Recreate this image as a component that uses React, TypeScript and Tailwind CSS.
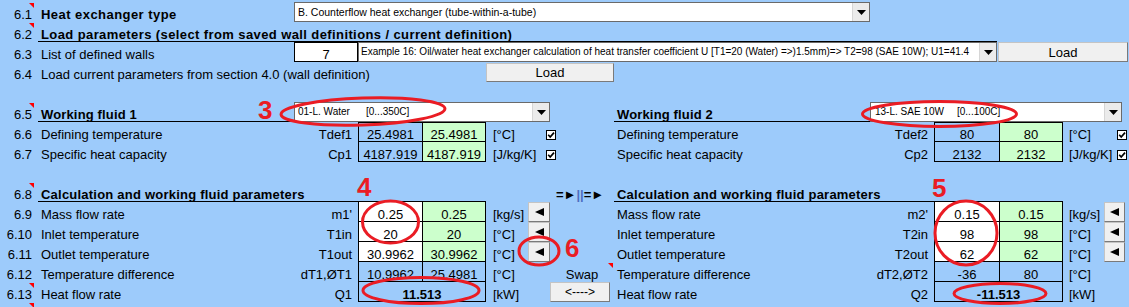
import React from "react";

type C = { className?: string; children?: React.ReactNode };

function CommentTri({ className = "" }: { className?: string }) {
  return (
    <svg className={`absolute ${className}`} width="5" height="5" viewBox="0 0 5 5">
      <polygon points="0,0 5,0 5,5" fill="#ff0000" />
    </svg>
  );
}

function Num({ n, tri }: { n?: string; tri?: boolean }) {
  return (
    <div className="relative w-[38px] shrink-0 text-right pr-[6px] pt-[3px]">
      {n}
      {tri && <CommentTri className="top-[1px] right-[4px]" />}
    </div>
  );
}

function Dropdown({ className = "", children }: C) {
  return (
    <div className={`flex h-[20px] shrink-0 bg-white border border-[#6a6a6a] ${className}`}>
      <div className="flex-1 min-w-0 overflow-hidden whitespace-nowrap flex items-center leading-none">
        {children}
      </div>
      <div className="w-[17px] shrink-0 bg-[#ebebeb] border-l border-[#d6d6d6] flex items-center justify-center">
        <svg width="9" height="5" viewBox="0 0 9 5">
          <polygon points="0,0 9,0 4.5,5" fill="#000" />
        </svg>
      </div>
    </div>
  );
}

function Btn({ className = "", children }: C) {
  return (
    <div
      className={`flex items-center justify-center shrink-0 bg-[#f0f0f0] border border-[#c4c4c4] border-r-[#7a7a7a] border-b-[#7a7a7a] leading-none ${className}`}
    >
      {children}
    </div>
  );
}

function ArrowBtn({ className = "" }: { className?: string }) {
  return (
    <Btn className={`h-[20px] ${className}`}>
      <svg width="9" height="8" viewBox="0 0 9 8">
        <polygon points="9,0 9,8 0,4" fill="#000" />
      </svg>
    </Btn>
  );
}

function Check() {
  return (
    <svg className="block" width="10" height="10" viewBox="0 0 10 10">
      <rect x="0.5" y="0.5" width="9" height="9" fill="#fff" stroke="#000" />
      <path d="M2.2 4.8 L4.2 7 L8 2.6" fill="none" stroke="#000" strokeWidth="1.7" />
    </svg>
  );
}

function Cell({ className = "", children, top }: C & { top?: boolean }) {
  return (
    <div
      className={`shrink-0 text-center border-l border-b border-black whitespace-nowrap ${
        top ? "border-t pt-[2px]" : "pt-[3px]"
      } ${className}`}
    >
      {children}
    </div>
  );
}

const G = "bg-[#ccffcc]";
const W = "bg-white";
const row = "flex h-[20px] leading-[20px] whitespace-nowrap";

type Side = {
  label: string;
  sym: string;
  v1?: string;
  v2?: string;
  b1?: string;
  b2?: string;
  unit: string;
  arrow?: boolean;
  merged?: string;
};

function DataRow({
  n,
  tri,
  L,
  R,
  mid,
}: {
  n: string;
  tri?: boolean;
  L: Side;
  R: Side;
  mid?: React.ReactNode;
}) {
  return (
    <div className={row}>
      <Num n={n} tri={tri} />
      <div className="w-[252px] shrink-0 pl-[3px] pt-[3px]">{L.label}</div>
      <div className="w-[68px] shrink-0 text-right pr-[6px] pt-[3px]">{L.sym}</div>
      {L.merged ? (
        <Cell className="w-[128px] border-r font-bold">{L.merged}</Cell>
      ) : (
        <>
          <Cell className={`w-[64px] ${L.b1 ?? ""}`}>{L.v1}</Cell>
          <Cell className={`w-[64px] border-r ${L.b2 ?? ""}`}>{L.v2}</Cell>
        </>
      )}
      <div className="w-[42px] shrink-0 pl-[7px] pt-[3px]">{L.unit}</div>
      {L.arrow ? <ArrowBtn className="w-[22px]" /> : <div className="w-[22px] shrink-0" />}
      <div className="relative w-[64px] shrink-0">{mid}</div>

      <div className="w-[256px] shrink-0 pl-[3px] pt-[3px]">{R.label}</div>
      <div className="w-[64px] shrink-0 text-right pr-[6px] pt-[3px]">{R.sym}</div>
      {R.merged ? (
        <Cell className="w-[129px] border-r font-bold">{R.merged}</Cell>
      ) : (
        <>
          <Cell className={`w-[65px] ${R.b1 ?? ""}`}>{R.v1}</Cell>
          <Cell className={`w-[64px] border-r ${R.b2 ?? ""}`}>{R.v2}</Cell>
        </>
      )}
      <div className="w-[41px] shrink-0 pl-[6px] pt-[3px]">{R.unit}</div>
      {R.arrow && <ArrowBtn className="w-[21px]" />}
    </div>
  );
}

export default function App() {
  return (
    <div className="relative w-[1129px] h-[307px] overflow-hidden bg-[#9dcbfb] text-black text-[13px] font-['Liberation_Sans',Arial,sans-serif]">
      <div className="flex flex-col pt-[2px]">
        {/* 6.1 */}
        <div className={row}>
          <Num n="6.1" tri />
          <div className="w-[256px] shrink-0 pl-[3px] pt-[3px] font-bold tracking-[0.45px]">Heat exchanger type</div>
          <Dropdown className="w-[576px]">
            <span className="pl-[3px] text-[10.5px]">B. Counterflow heat exchanger (tube-within-a-tube)</span>
          </Dropdown>
        </div>
        {/* 6.2 */}
        <div className={row}>
          <Num n="6.2" tri />
          <div className="w-[959px] shrink-0 pl-[3px] pt-[3px] font-bold tracking-[0.4px] border-b border-black">
            Load parameters (select from saved wall definitions / current definition)
          </div>
        </div>
        {/* 6.3 */}
        <div className={row}>
          <Num n="6.3" />
          <div className="w-[256px] shrink-0 pl-[3px] pt-[3px]">List of defined walls</div>
          <div className="w-[64px] shrink-0 bg-white border border-black text-center pt-[2px]">7</div>
          <Dropdown className="w-[639px]">
            <span className="pl-[2px] text-[10px]">
              Example 16: Oil/water heat exchanger calculation of heat transfer coefficient U [T1=20 (Water) =&gt;)1.5mm)=&gt; T2=98 (SAE 10W); U1=41.4
            </span>
          </Dropdown>
          <Btn className="w-[130px] h-[20px] ml-[1px]">Load</Btn>
        </div>
        {/* 6.4 */}
        <div className={row}>
          <Num n="6.4" />
          <div className="w-[448px] shrink-0 pl-[3px] pt-[3px]">
            Load current parameters from section 4.0 (wall definition)
          </div>
          <Btn className="w-[128px] h-[19px] mt-[1px]">Load</Btn>
        </div>
        <div className="h-[20px]" />
        {/* 6.5 */}
        <div className={row}>
          <Num n="6.5" tri />
          <div className="w-[256px] shrink-0 pl-[3px] pt-[3px] font-bold tracking-[0.15px] border-b border-black">Working fluid 1</div>
          <Dropdown className="w-[256px]">
            <span className="pl-[3px] text-[10px]">
              <span className="inline-block w-[68px]">01-L. Water</span>[0...350C]
            </span>
          </Dropdown>
          <div className="w-[64px] shrink-0" />
          <div className="w-[256px] shrink-0 pl-[3px] pt-[3px] font-bold tracking-[0.15px] border-b border-black">Working fluid 2</div>
          <Dropdown className="w-[252px]">
            <span className="pl-[4px] text-[10px]">
              <span className="inline-block w-[82px]">13-L. SAE 10W</span>[0...100C]
            </span>
          </Dropdown>
        </div>
        {/* 6.6 */}
        <div className={row}>
          <Num n="6.6" />
          <div className="w-[252px] shrink-0 pl-[3px] pt-[3px]">Defining temperature</div>
          <div className="w-[68px] shrink-0 text-right pr-[6px] pt-[3px]">Tdef1</div>
          <Cell top className="w-[64px]">25.4981</Cell>
          <Cell top className={`w-[64px] border-r ${G}`}>25.4981</Cell>
          <div className="w-[60px] shrink-0 pl-[7px] pt-[3px]">[°C]</div>
          <div className="w-[68px] shrink-0 pt-[8px] leading-none">
            <Check />
          </div>
          <div className="w-[256px] shrink-0 pl-[3px] pt-[3px]">Defining temperature</div>
          <div className="w-[64px] shrink-0 text-right pr-[6px] pt-[3px]">Tdef2</div>
          <Cell top className="w-[65px]">80</Cell>
          <Cell top className={`w-[64px] border-r ${G}`}>80</Cell>
          <div className="w-[54px] shrink-0 pl-[6px] pt-[3px]">[°C]</div>
          <div className="shrink-0 pt-[8px] leading-none">
            <Check />
          </div>
        </div>
        {/* 6.7 */}
        <div className={row}>
          <Num n="6.7" />
          <div className="w-[252px] shrink-0 pl-[3px] pt-[3px]">Specific heat capacity</div>
          <div className="w-[68px] shrink-0 text-right pr-[6px] pt-[3px]">Cp1</div>
          <Cell className="w-[64px]">4187.919</Cell>
          <Cell className={`w-[64px] border-r ${G}`}>4187.919</Cell>
          <div className="w-[60px] shrink-0 pl-[7px] pt-[3px]">[J/kg/K]</div>
          <div className="w-[68px] shrink-0 pt-[8px] leading-none">
            <Check />
          </div>
          <div className="w-[256px] shrink-0 pl-[3px] pt-[3px]">Specific heat capacity</div>
          <div className="w-[64px] shrink-0 text-right pr-[6px] pt-[3px]">Cp2</div>
          <Cell className="w-[65px]">2132</Cell>
          <Cell className={`w-[64px] border-r ${G}`}>2132</Cell>
          <div className="w-[54px] shrink-0 pl-[6px] pt-[3px]">[J/kg/K]</div>
          <div className="shrink-0 pt-[8px] leading-none">
            <Check />
          </div>
        </div>
        <div className="h-[20px]" />
        {/* 6.8 */}
        <div className={row}>
          <Num n="6.8" tri />
          <div className="w-[448px] shrink-0 pl-[3px] pt-[3px] font-bold tracking-[0.22px] border-b border-black">
            Calculation and working fluid parameters
          </div>
          <div className="w-[64px] shrink-0" />
          <div className="w-[64px] shrink-0 pl-[6px] pt-[3px] font-bold">
            =►<span className="text-[#4d6fc0]">||</span>=►
          </div>
          <div className="w-[449px] shrink-0 pl-[3px] pt-[3px] font-bold tracking-[0.22px] border-b border-black">
            Calculation and working fluid parameters
          </div>
        </div>
        <DataRow
          n="6.9"
          L={{ label: "Mass flow rate", sym: "m1'", v1: "0.25", v2: "0.25", b1: W, b2: G, unit: "[kg/s]", arrow: true }}
          R={{ label: "Mass flow rate", sym: "m2'", v1: "0.15", v2: "0.15", b1: W, b2: G, unit: "[kg/s]", arrow: true }}
        />
        <DataRow
          n="6.10"
          L={{ label: "Inlet temperature", sym: "T1in", v1: "20", v2: "20", b1: W, b2: G, unit: "[°C]", arrow: true }}
          R={{ label: "Inlet temperature", sym: "T2in", v1: "98", v2: "98", b1: W, b2: G, unit: "[°C]", arrow: true }}
        />
        <DataRow
          n="6.11"
          L={{ label: "Outlet temperature", sym: "T1out", v1: "30.9962", v2: "30.9962", b1: W, b2: G, unit: "[°C]", arrow: true }}
          R={{ label: "Outlet temperature", sym: "T2out", v1: "62", v2: "62", b1: W, b2: G, unit: "[°C]", arrow: true }}
        />
        <DataRow
          n="6.12"
          L={{ label: "Temperature difference", sym: "dT1,ØT1", v1: "10.9962", v2: "25.4981", unit: "[°C]" }}
          R={{ label: "Temperature difference", sym: "dT2,ØT2", v1: "-36", v2: "80", unit: "[°C]" }}
          mid={
            <>
              <div className="text-center pt-[3px]">Swap</div>
              <CommentTri className="top-[1px] right-[1px]" />
            </>
          }
        />
        <DataRow
          n="6.13"
          tri
          L={{ label: "Heat flow rate", sym: "Q1", merged: "11.513", unit: "[kW]" }}
          R={{ label: "Heat flow rate", sym: "Q2", merged: "-11.513", unit: "[kW]" }}
          mid={<Btn className="w-[60px] h-[20px] text-[12px]">&lt;----&gt;</Btn>}
        />
        <div className="flex h-[5px]">
          <Num tri />
        </div>
      </div>

      {/* red annotations */}
      <svg className="absolute left-0 top-0 pointer-events-none" width="1129" height="307" viewBox="0 0 1129 307">
        <g fill="none" stroke="#ea1c24" strokeWidth="3">
          <ellipse cx="363" cy="111.5" rx="82" ry="13.5" transform="rotate(-2 363 111.5)" />
          <ellipse cx="939.5" cy="114" rx="77" ry="12.5" />
          <ellipse cx="390.5" cy="222" rx="28" ry="21" />
          <ellipse cx="966" cy="233" rx="31" ry="32" />
          <ellipse cx="539" cy="251" rx="20" ry="14" />
          <ellipse cx="421" cy="290.5" rx="58" ry="13" />
          <ellipse cx="1000" cy="293.5" rx="46" ry="10" />
        </g>
      </svg>
      <span className="absolute left-[258px] top-[97px] text-[26px] leading-[26px] font-bold text-[#ea1c24]">3</span>
      <span className="absolute left-[357px] top-[174px] text-[26px] leading-[26px] font-bold text-[#ea1c24]">4</span>
      <span className="absolute left-[932px] top-[175px] text-[26px] leading-[26px] font-bold text-[#ea1c24]">5</span>
      <span className="absolute left-[565px] top-[235px] text-[26px] leading-[26px] font-bold text-[#ea1c24]">6</span>
    </div>
  );
}
